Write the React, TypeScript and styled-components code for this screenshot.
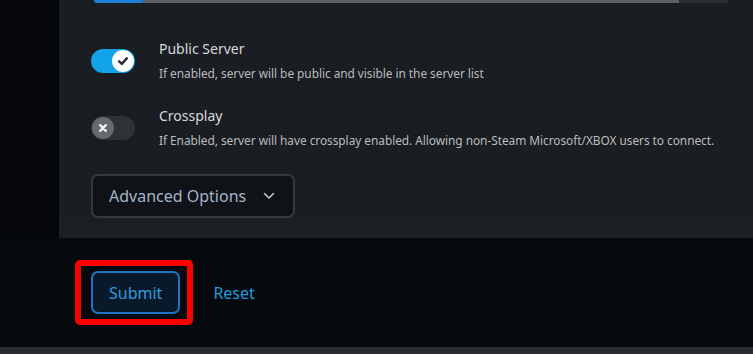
import React from "react";
import styled, { createGlobalStyle } from "styled-components";

const Global = createGlobalStyle`
  html, body { margin: 0; padding: 0; background: #05080c; }
  body { font-family: "Noto Sans", "Open Sans", sans-serif; width: 753px; height: 354px; overflow: hidden; }
  * { box-sizing: border-box; }
`;

const Page = styled.div`
  width: 753px;
  height: 354px;
  display: flex;
  flex-direction: column;
  background: #05080c;
`;

const Main = styled.div`
  display: flex;
  height: 238px;
`;

const LeftStrip = styled.div`
  width: 59px;
  background: #05070a;
`;

const Panel = styled.div`
  flex: 1;
  background: linear-gradient(to bottom, #1a1d21 0%, #1a1d21 88%, #1d2024 100%);
  padding-left: 32px;
  display: flex;
  flex-direction: column;
`;

const Track = styled.div`
  margin-left: 3px;
  width: 635px;
  height: 3px;
  border-radius: 0 0 3px 3px;
  background: linear-gradient(to right, #1b7fd6 0px, #1b7fd6 49px, #5b5e62 49px, #5b5e62 585px, #2a2d31 585px);
`;

const Settings = styled.div`
  margin-top: 36px;
  display: flex;
  flex-direction: column;
  gap: 25px;
`;

const Row = styled.div`
  display: flex;
  align-items: flex-start;
  gap: 24px;
`;

const Switch = styled.div<{ $on: boolean }>`
  margin-top: 10px;
  width: 44px;
  height: 24px;
  border-radius: 12px;
  background: ${(p) => (p.$on ? "#10a3e8" : "#2e3135")};
  display: flex;
  align-items: center;
  justify-content: ${(p) => (p.$on ? "flex-end" : "flex-start")};
  padding: 0 1px;
  flex-shrink: 0;
`;

const Knob = styled.div<{ $on: boolean }>`
  width: 22px;
  height: 22px;
  border-radius: 50%;
  background: ${(p) => (p.$on ? "#ffffff" : "#66696d")};
  display: flex;
  align-items: center;
  justify-content: center;
`;

const TextCol = styled.div`
  display: flex;
  flex-direction: column;
  gap: 6px;
`;

const Title = styled.div`
  font-size: 14px;
  line-height: 20px;
  color: #d6d9dc;
`;

const Desc = styled.div`
  font-size: 11.9px;
  letter-spacing: -0.05px;
  line-height: 16px;
  color: #b9bcbf;
`;

const AdvancedButton = styled.button`
  margin-top: 26px;
  align-self: flex-start;
  width: 204px;
  height: 44px;
  border: 2px solid #37393e;
  border-radius: 7px;
  background: #0f1217;
  color: #a3b6c9;
  font-family: "Noto Sans", "Open Sans", sans-serif;
  font-size: 16px;
  display: flex;
  align-items: center;
  padding: 0 0 0 16px;
  gap: 17px;
`;

const Footer = styled.div`
  height: 109px;
  background: #06090d;
  padding: 33px 0 0 91px;
  display: flex;
  align-items: flex-start;
  gap: 33px;
`;

const SubmitWrap = styled.div`
  position: relative;
`;

const SubmitButton = styled.button`
  height: 43px;
  padding: 0 16px;
  border: 2px solid #1f74c2;
  border-radius: 7px;
  background: #0a1929;
  color: #2e9ede;
  font-family: "Noto Sans", "Open Sans", sans-serif;
  font-size: 16px;
`;

const Highlight = styled.div`
  position: absolute;
  left: -16px;
  top: -11px;
  width: 118px;
  height: 65px;
  border: 6px solid #ff0000;
  border-radius: 5px;
  pointer-events: none;
`;

const ResetLink = styled.span`
  font-size: 16px;
  line-height: 45px;
  color: #1f9bd8;
`;

const BottomBar = styled.div`
  height: 7px;
  background: #2a2c30;
`;

const Check = () => (
  <svg width="12" height="12" viewBox="0 0 12 12">
    <path d="M2.2 6.3 L4.8 8.8 L9.8 3.4" fill="none" stroke="#2b2e33" strokeWidth="2.5" strokeLinecap="round" strokeLinejoin="round" />
  </svg>
);

const Cross = () => (
  <svg width="10" height="10" viewBox="0 0 10 10">
    <path d="M2.2 2.2 L7.8 7.8 M7.8 2.2 L2.2 7.8" fill="none" stroke="#f2f2f2" strokeWidth="2.4" strokeLinecap="round" />
  </svg>
);

const Chevron = () => (
  <svg width="12" height="8" viewBox="0 0 12 8">
    <path d="M1.5 1.5 L6 6 L10.5 1.5" fill="none" stroke="#c3c7cb" strokeWidth="1.6" strokeLinecap="round" strokeLinejoin="round" />
  </svg>
);

const Toggle = ({ on }: { on: boolean }) => (
  <Switch $on={on}>
    <Knob $on={on}>{on ? <Check /> : <Cross />}</Knob>
  </Switch>
);

export default function App() {
  return (
    <>
      <Global />
      <Page>
        <Main>
          <LeftStrip />
          <Panel>
            <Track />
            <Settings>
              <Row>
                <Toggle on={true} />
                <TextCol>
                  <Title>Public Server</Title>
                  <Desc>If enabled, server will be public and visible in the server list</Desc>
                </TextCol>
              </Row>
              <Row>
                <Toggle on={false} />
                <TextCol>
                  <Title>Crossplay</Title>
                  <Desc>If Enabled, server will have crossplay enabled. Allowing non-Steam Microsoft/XBOX users to connect.</Desc>
                </TextCol>
              </Row>
            </Settings>
            <AdvancedButton>
              Advanced Options
              <Chevron />
            </AdvancedButton>
          </Panel>
        </Main>
        <Footer>
          <SubmitWrap>
            <SubmitButton>Submit</SubmitButton>
            <Highlight />
          </SubmitWrap>
          <ResetLink>Reset</ResetLink>
        </Footer>
        <BottomBar />
      </Page>
    </>
  );
}
